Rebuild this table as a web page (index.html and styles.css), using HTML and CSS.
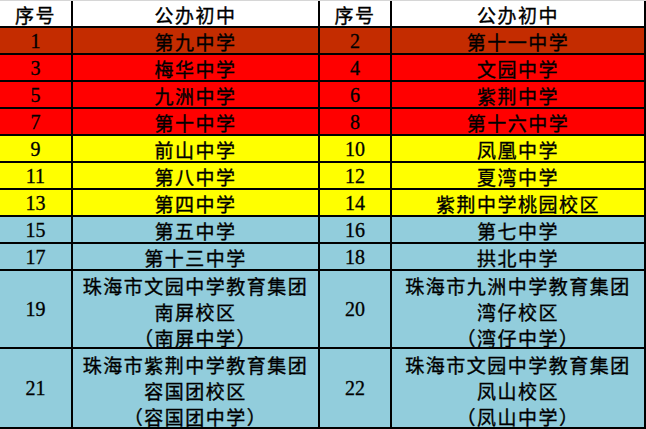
FILE: index.html
```html
<!DOCTYPE html>
<html lang="zh-CN">
<head>
<meta charset="utf-8">
<title>公办初中</title>
<link rel="stylesheet" href="styles.css">
</head>
<body>
<div class="sheet">
  <div class="grid">
    <div class="cell hd">序号</div><div class="cell hd">公办初中</div><div class="cell hd">序号</div><div class="cell hd">公办初中</div>

    <div class="cell dk num">1</div><div class="cell dk">第九中学</div><div class="cell dk num">2</div><div class="cell dk">第十一中学</div>
    <div class="cell rd num">3</div><div class="cell rd">梅华中学</div><div class="cell rd num">4</div><div class="cell rd">文园中学</div>
    <div class="cell rd num">5</div><div class="cell rd">九洲中学</div><div class="cell rd num">6</div><div class="cell rd">紫荆中学</div>
    <div class="cell rd num">7</div><div class="cell rd">第十中学</div><div class="cell rd num">8</div><div class="cell rd">第十六中学</div>

    <div class="cell yl num">9</div><div class="cell yl">前山中学</div><div class="cell yl num">10</div><div class="cell yl">凤凰中学</div>
    <div class="cell yl num">11</div><div class="cell yl">第八中学</div><div class="cell yl num">12</div><div class="cell yl">夏湾中学</div>
    <div class="cell yl num">13</div><div class="cell yl">第四中学</div><div class="cell yl num">14</div><div class="cell yl">紫荆中学桃园校区</div>

    <div class="cell bl num">15</div><div class="cell bl">第五中学</div><div class="cell bl num">16</div><div class="cell bl">第七中学</div>
    <div class="cell bl num">17</div><div class="cell bl">第十三中学</div><div class="cell bl num">18</div><div class="cell bl">拱北中学</div>

    <div class="cell bl num">19</div>
    <div class="cell bl multi"><span>珠海市文园中学教育集团</span><span>南屏校区</span><span>（南屏中学）</span></div>
    <div class="cell bl num">20</div>
    <div class="cell bl multi"><span>珠海市九洲中学教育集团</span><span>湾仔校区</span><span>（湾仔中学）</span></div>

    <div class="cell bl num">21</div>
    <div class="cell bl multi"><span>珠海市紫荆中学教育集团</span><span>容国团校区</span><span>（容国团中学）</span></div>
    <div class="cell bl num">22</div>
    <div class="cell bl multi"><span>珠海市文园中学教育集团</span><span>凤山校区</span><span>（凤山中学）</span></div>
  </div>
</div>
</body>
</html>
```

FILE: styles.css
```css
html, body {
  margin: 0;
  padding: 0;
  background: #ffffff;
}

.sheet {
  width: 646px;
  height: 429px;
  border-top: 1px solid #d6d6d6;
  box-sizing: border-box;
}

.grid {
  display: grid;
  grid-template-columns: 71px 245px 70px 252px;
  grid-template-rows: 25px repeat(9, 25px) 76px 78px;
  column-gap: 2px;
  row-gap: 2px;
  background: #000000;
  border-right: 2px solid #000000;
  border-bottom: 2px solid #000000;
  width: 646px;
  box-sizing: border-box;
}

.cell {
  display: flex;
  align-items: center;
  justify-content: center;
  font-family: "Noto Sans CJK SC", "Noto Sans CJK TC", sans-serif;
  font-size: 19px;
  letter-spacing: 1.5px;
  color: #000000;
  line-height: 25px;
  white-space: nowrap;
  padding-top: 1px;
  box-sizing: border-box;
  -webkit-text-stroke: 0.35px #000000;
}

.num {
  font-family: "Liberation Serif", "Noto Sans CJK SC", serif;
  font-size: 20px;
  letter-spacing: 0;
  -webkit-text-stroke: 0.3px #000000;
}

.hd { background: #ffffff; }
.dk { background: #c42c00; }
.rd { background: #ff0000; }
.yl { background: #ffff00; }
.bl { background: #92cddc; }

.multi {
  flex-direction: column;
  line-height: 26px;
  padding-top: 5px;
}
```
